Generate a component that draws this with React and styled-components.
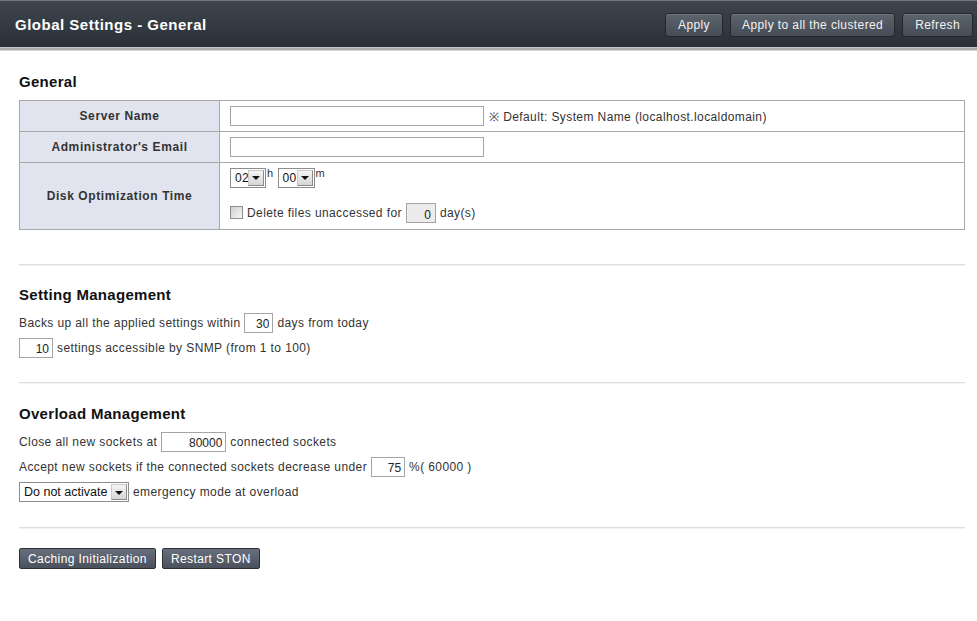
import React from "react";
import styled, { createGlobalStyle } from "styled-components";

const Global = createGlobalStyle`
  html, body { margin: 0; padding: 0; background: #fff; }
  body { font-family: "Liberation Sans", Arial, sans-serif; font-size: 12px; color: #333; letter-spacing: 0.4px; }
  * { box-sizing: border-box; }
`;

const Header = styled.header`
  height: 47px;
  display: flex;
  align-items: center;
  justify-content: space-between;
  padding: 0 4px 0 15px;
  border-top: 1px solid #70757c;
  background: linear-gradient(#3e454e, #2a3038);
`;

const Shade = styled.div`
  height: 4px;
  background: linear-gradient(#d0d0d0, #9a9a9a 50%, #e6e6e6);
`;

const Title = styled.h1`
  margin: 0;
  font-size: 15px;
  font-weight: bold;
  letter-spacing: 0.5px;
  color: #fff;
  padding-top: 1px;
`;

const HeaderActions = styled.div`
  display: flex;
  gap: 7px;
  padding-top: 1px;
`;

const HeaderButton = styled.button`
  height: 24px;
  padding: 0 ${(p) => p.$pad || 12}px;
  font-family: inherit;
  font-size: 12px;
  letter-spacing: 0.4px;
  color: #f2f2f2;
  background: linear-gradient(#5c646e, #454c55);
  border: 1px solid #22272d;
  border-radius: 3px;
  box-shadow: inset 0 1px 0 rgba(255, 255, 255, 0.12);
`;

const Content = styled.main`
  padding: 0 12px 0 19px;
`;

const Section = styled.section`
  padding: ${(p) => p.$top}px 0 ${(p) => p.$bottom}px;
`;

const Heading = styled.h2`
  margin: 0 0 ${(p) => p.$gap || 9}px;
  font-size: 15px;
  font-weight: bold;
  letter-spacing: 0.3px;
  line-height: 18px;
  color: #111;
`;

const Divider = styled.hr`
  margin: 0;
  border: none;
  border-top: 1px solid #dedede;
  border-bottom: 1px solid #f3f3f3;
`;

const Table = styled.table`
  width: 100%;
  border-collapse: collapse;
  border: 1px solid #a8a8a8;
`;

const LabelCell = styled.th`
  width: 200px;
  background: #e1e4ee;
  border: 1px solid #a8a8a8;
  font-size: 12px;
  font-weight: bold;
  color: #333;
  letter-spacing: 0.6px;
  height: ${(p) => p.$h}px;
  text-align: center;
  vertical-align: middle;
`;

const ValueCell = styled.td`
  border: 1px solid #a8a8a8;
  padding: ${(p) => p.$pad || "0 10px"};
  vertical-align: middle;
`;

const Line = styled.div`
  display: flex;
  align-items: ${(p) => p.$align || "center"};
  gap: ${(p) => (p.$gap === undefined ? 4 : p.$gap)}px;
  height: 20px;
  margin-top: ${(p) => p.$mt || 0}px;
  white-space: nowrap;
`;

const Rows = styled.div`
  display: flex;
  flex-direction: column;
  gap: 5px;
`;

const TextInput = styled.input`
  width: ${(p) => p.$w}px;
  height: 20px;
  border: 1px solid #a5a5a5;
  background: ${(p) => (p.disabled ? "#ececec" : "#fff")};
  font-family: inherit;
  font-size: 12px;
  color: #222;
  text-align: ${(p) => (p.$right ? "right" : "left")};
  padding: ${(p) => (p.disabled ? "4px 4px 0" : "1px 3px 0")};
  margin: 0;
  outline: none;
`;

const SelectBox = styled.span`
  display: inline-flex;
  align-items: center;
  width: ${(p) => p.$w}px;
  height: 20px;
  border: 1px solid #8c8c8c;
  background: #fff;
  padding: 1px;
`;

const SelectValue = styled.span`
  flex: 1;
  overflow: hidden;
  padding-left: ${(p) => p.$pl || 3}px;
  font-size: ${(p) => p.$fs || 12}px;
  letter-spacing: ${(p) => (p.$fs ? 0 : 0.4)}px;
  color: #111;
  line-height: 16px;
`;

const SelectArrow = styled.span`
  flex: none;
  width: 16px;
  height: 16px;
  display: flex;
  align-items: center;
  justify-content: center;
  border: 1px solid #8a8a8a;
  border-top-color: #c8c8c8;
  border-left-color: #c8c8c8;
  background: linear-gradient(#f5f5f5, #d6d6d6);
  &::after {
    content: "";
    border-left: 4px solid transparent;
    border-right: 4px solid transparent;
    border-top: 4px solid #111;
    margin-top: 1px;
  }
`;

const Unit = styled.span`
  align-self: flex-start;
  font-size: 11px;
  line-height: 11px;
  margin-left: -3px;
`;

const Checkbox = styled.span`
  width: 13px;
  height: 13px;
  border: 1px solid #8e8e8e;
  background: linear-gradient(135deg, #cfcfcf, #f6f6f6);
`;

const Note = styled.span`
  color: #333;
`;

const Actions = styled.div`
  display: flex;
  gap: 6px;
  padding-top: 19px;
`;

const ActionButton = styled.button`
  height: 21px;
  padding: 0 ${(p) => p.$pad || 9}px;
  font-family: inherit;
  font-size: 12px;
  letter-spacing: 0.4px;
  color: #fff;
  background: linear-gradient(#68707d, #4a515d);
  border: 1px solid #2c3036;
  border-radius: 2px;
`;

function Select({ w, value, fs, pl }) {
  return (
    <SelectBox $w={w}>
      <SelectValue $fs={fs} $pl={pl}>{value}</SelectValue>
      <SelectArrow />
    </SelectBox>
  );
}

export default function App() {
  return (
    <>
      <Global />
      <Header>
        <Title>Global Settings - General</Title>
        <HeaderActions>
          <HeaderButton $pad={12}>Apply</HeaderButton>
          <HeaderButton $pad={11}>Apply to all the clustered</HeaderButton>
          <HeaderButton $pad={12}>Refresh</HeaderButton>
        </HeaderActions>
      </Header>
      <Shade />
      <Content>
        <Section $top={22} $bottom={34}>
          <Heading $gap={9}>General</Heading>
          <Table>
            <tbody>
              <tr>
                <LabelCell $h={31}>Server Name</LabelCell>
                <ValueCell>
                  <Line $gap={5}>
                    <TextInput $w={254} />
                    <Note>※ Default: System Name (localhost.localdomain)</Note>
                  </Line>
                </ValueCell>
              </tr>
              <tr>
                <LabelCell $h={31}>Administrator's Email</LabelCell>
                <ValueCell>
                  <Line>
                    <TextInput $w={254} />
                  </Line>
                </ValueCell>
              </tr>
              <tr>
                <LabelCell $h={67}>Disk Optimization Time</LabelCell>
                <ValueCell $pad="4px 10px 6px">
                  <Line $gap={4}>
                    <Select w={36} value="02" />
                    <Unit>h</Unit>
                    <Select w={37} value="00" />
                    <Unit>m</Unit>
                  </Line>
                  <Line $mt={15}>
                    <Checkbox />
                    <span>Delete files unaccessed for</span>
                    <TextInput $w={30} $right disabled defaultValue="0" />
                    <span>day(s)</span>
                  </Line>
                </ValueCell>
              </tr>
            </tbody>
          </Table>
        </Section>
        <Divider />
        <Section $top={20} $bottom={24}>
          <Heading>Setting Management</Heading>
          <Rows>
            <Line>
              <span>Backs up all the applied settings within</span>
              <TextInput $w={29} $right defaultValue="30" />
              <span>days from today</span>
            </Line>
            <Line>
              <TextInput $w={34} $right defaultValue="10" />
              <span>settings accessible by SNMP (from 1 to 100)</span>
            </Line>
          </Rows>
        </Section>
        <Divider />
        <Section $top={21} $bottom={25}>
          <Heading>Overload Management</Heading>
          <Rows>
            <Line>
              <span>Close all new sockets at</span>
              <TextInput $w={65} $right defaultValue="80000" />
              <span>connected sockets</span>
            </Line>
            <Line>
              <span>Accept new sockets if the connected sockets decrease under</span>
              <TextInput $w={34} $right defaultValue="75" />
              <span>%( 60000 )</span>
            </Line>
            <Line>
              <Select w={110} value="Do not activate" fs={12.5} pl={3} />
              <span>emergency mode at overload</span>
            </Line>
          </Rows>
        </Section>
        <Divider />
        <Actions>
          <ActionButton $pad={8}>Caching Initialization</ActionButton>
          <ActionButton $pad={8}>Restart STON</ActionButton>
        </Actions>
      </Content>
    </>
  );
}
